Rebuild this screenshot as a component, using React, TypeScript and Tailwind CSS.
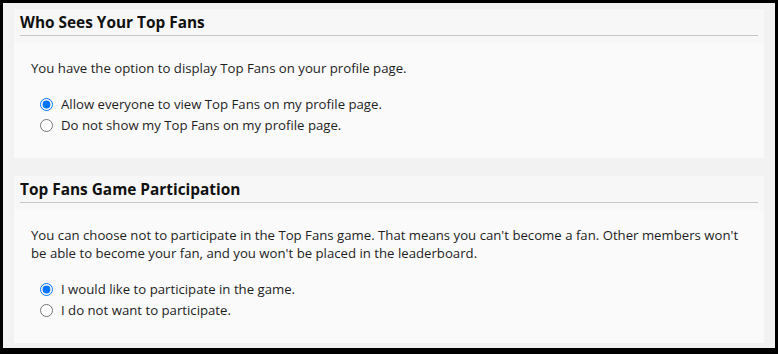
const sections = [
  {
    title: "Who Sees Your Top Fans",
    text: "You have the option to display Top Fans on your profile page.",
    name: "visibility",
    options: [
      "Allow everyone to view Top Fans on my profile page.",
      "Do not show my Top Fans on my profile page.",
    ],
  },
  {
    title: "Top Fans Game Participation",
    text: "You can choose not to participate in the Top Fans game. That means you can't become a fan. Other members won't be able to become your fan, and you won't be placed in the leaderboard.",
    name: "participation",
    options: [
      "I would like to participate in the game.",
      "I do not want to participate.",
    ],
  },
];

function Section({
  title,
  text,
  name,
  options,
}: {
  title: string;
  text: string;
  name: string;
  options: string[];
}) {
  return (
    <section className="bg-[#fafafa]">
      <div className="bg-[#f7f7f7] px-[6px] pb-[7px] pt-[4px]">
        <h2 className="border-b border-[#c6c6c6] pb-[2px] text-[15.4px] font-bold leading-[20px] text-[#111]">
          {title}
        </h2>
      </div>
      <div className="pb-[22px] pl-[17px] pr-[14px] pt-[16px]">
        <p className="leading-[18px]">{text}</p>
        <div className="mt-[17px] flex flex-col pl-[9px]">
          {options.map((option, index) => (
            <label key={option} className="flex h-[21px] items-center gap-[8px]">
              <input
                type="radio"
                name={name}
                defaultChecked={index === 0}
                className="m-0 h-[13px] w-[13px]"
              />
              <span>{option}</span>
            </label>
          ))}
        </div>
      </div>
    </section>
  );
}

export default function App() {
  return (
    <div
      className="flex h-[354px] w-[778px] flex-col gap-[18px] border-b-[6px] border-l-[3px] border-r-[3px] border-t-[3px] border-black bg-[#f2f2f2] px-[11px] pt-[6px] text-[13.2px] text-[#1e1e1e]"
      style={{ fontFamily: '"Open Sans", sans-serif' }}
    >
      {sections.map((section) => (
        <Section key={section.name} {...section} />
      ))}
    </div>
  );
}
